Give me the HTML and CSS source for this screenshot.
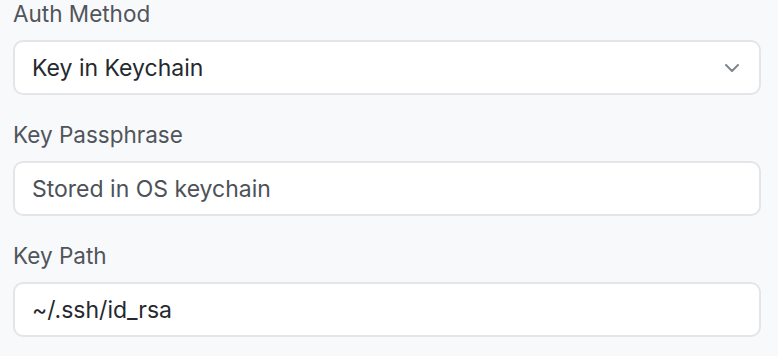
FILE: index.html
```html
<!DOCTYPE html>
<html lang="en">
<head>
    <meta charset="UTF-8">
    <meta name="viewport" content="width=device-width, initial-scale=1.0">
    <title>SSH Auth</title>
    <link rel="stylesheet" href="styles.css">
</head>
<body>
    <div class="form">
        <div class="field">
            <label for="authMethod">Auth Method</label>
            <div class="select" id="authMethod">
                <span>Key in Keychain</span>
                <svg class="chevron" width="14" height="8" viewBox="0 0 14 8">
                    <path d="M1 1 L7 7 L13 1" fill="none" stroke="#80868e" stroke-width="2" stroke-linecap="round" stroke-linejoin="round"/>
                </svg>
            </div>
        </div>
        <div class="field">
            <label for="passphrase">Key Passphrase</label>
            <input type="text" id="passphrase" placeholder="Stored in OS keychain">
        </div>
        <div class="field">
            <label for="keyPath">Key Path</label>
            <input type="text" id="keyPath" value="~/.ssh/id_rsa">
        </div>
    </div>
</body>
</html>
```

FILE: styles.css
```css
body {
    background-color: #f8f9fa;
    color: #1f2328;
    font-family: Inter, "Liberation Sans", sans-serif;
    margin: 0;
    padding: 0 17px 0 13px;
}
.form {
    display: flex;
    flex-direction: column;
    gap: 26px;
}
.field {
    display: flex;
    flex-direction: column;
    gap: 13px;
}
label {
    font-size: 22.5px;
    line-height: 27px;
    color: #50555c;
}
.select,
input {
    box-sizing: border-box;
    height: 55px;
    width: 100%;
    background-color: #ffffff;
    border: 2px solid #e3e5e9;
    border-radius: 10px;
    padding: 0 20px 0 17px;
    font-family: inherit;
    font-size: 23px;
    color: #25292e;
    margin: 0;
}
.select {
    display: flex;
    align-items: center;
    justify-content: space-between;
}
input::placeholder {
    color: #4d5258;
    opacity: 1;
}
input:focus {
    outline: none;
}
```
